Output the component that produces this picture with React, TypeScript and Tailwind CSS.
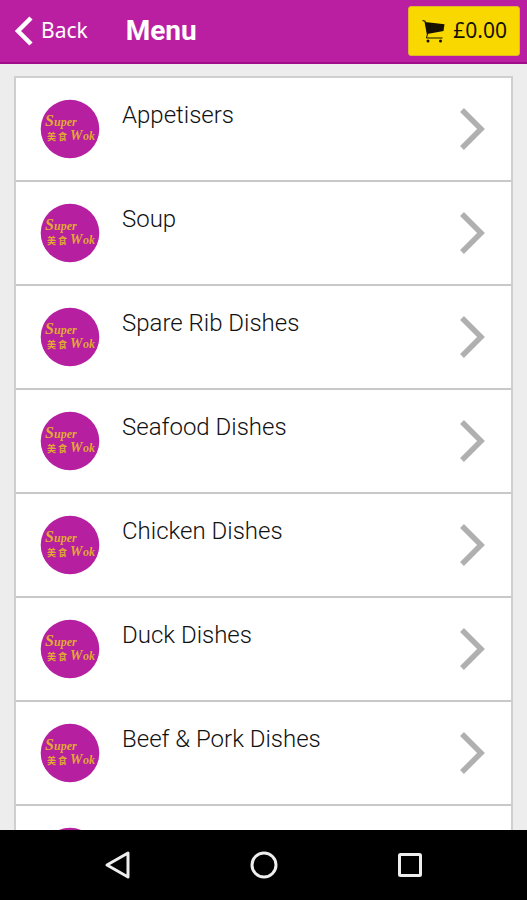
const categories = [
  'Appetisers',
  'Soup',
  'Spare Rib Dishes',
  'Seafood Dishes',
  'Chicken Dishes',
  'Duck Dishes',
  'Beef & Pork Dishes',
];

function WokLogo({ lettering = true }: { lettering?: boolean }) {
  return (
    <svg aria-hidden="true" className="size-[60px] shrink-0" viewBox="0 0 60 60">
      <circle cx="30" cy="30" r="29.3" fill="#b51fa0" />
      {lettering && (
        <g fill="#e2a832" fontFamily="'Liberation Serif', 'Noto Sans CJK SC', serif" fontStyle="italic" fontWeight="700">
          <text x="5" y="27" fontSize="16">S</text>
          <text x="14" y="27" fontSize="12">uper</text>
          <text x="7" y="41" fontSize="9" fontStyle="normal">美</text>
          <text x="18" y="41" fontSize="9" fontStyle="normal">食</text>
          <text x="30" y="41" fontSize="14">W</text>
          <text x="43" y="41" fontSize="12">ok</text>
        </g>
      )}
    </svg>
  );
}

function CartIcon() {
  return (
    <svg aria-hidden="true" className="h-6 w-6" viewBox="0 0 24 24" fill="none">
      <path d="M1.5 1.5L4 2.2L6.5 15.5" stroke="#151000" strokeWidth="1.2" />
      <path d="M4 3L23.5 5.2L22.5 12L6.2 15Z" fill="#151000" />
      <path d="M6.5 15L5.5 19H21.5" stroke="#151000" strokeWidth="1" />
      <circle cx="7" cy="22" r="1.5" fill="#151000" />
      <circle cx="19.5" cy="22" r="1.5" fill="#151000" />
    </svg>
  );
}

export default function App() {
  return (
    <div className="flex h-screen flex-col overflow-hidden bg-[#ededed] font-['Roboto',sans-serif]">
      {/* Header */}
      <header className="flex h-16 shrink-0 items-center border-b-2 border-[#a00d8a] bg-[#bb1fa1] pr-[7px] pl-[14px] text-white">
        <button className="flex items-center gap-2 font-['Noto_Sans',sans-serif] text-[21px] leading-7">
          <svg aria-hidden="true" className="h-[30px] w-[19px]" viewBox="0 0 19 30" fill="none">
            <path d="M17 2L4 15L17 28" stroke="white" strokeWidth="4.5" />
          </svg>
          <span className="pb-[2px]">Back</span>
        </button>
        <h1 className="ml-[38px] text-[28px] leading-8 font-bold">Menu</h1>
        <button className="ml-auto flex h-[50px] items-center gap-2 rounded-[3px] border border-[#dfb526] bg-[#f9d800] px-3 font-['Noto_Sans',sans-serif] text-[21px] leading-7 text-[#151000]">
          <CartIcon />
          <span className="pb-[2px]">£0.00</span>
        </button>
      </header>

      {/* Category list */}
      <main className="min-h-0 flex-1 overflow-hidden px-[14px] pt-3">
        <ul className="border-2 border-[#cfcfcf] bg-white">
          {categories.map((name) => (
            <li key={name} className="border-b-2 border-[#c8c8c8]">
              <button className="flex h-[102px] w-full items-center pr-[26px] pl-[24px] text-left">
                <WokLogo />
                <span className="ml-[22px] flex-1 self-start pt-[21px] text-2xl font-light text-[#111111]">{name}</span>
                <svg aria-hidden="true" className="h-11 w-[26px]" viewBox="0 0 26 44" fill="none">
                  <path d="M3 3L22 22L3 41" stroke="#b0b0b0" strokeWidth="5.5" />
                </svg>
              </button>
            </li>
          ))}
          {/* Next row, mostly below the fold */}
          <li className="flex h-[102px] items-center pl-[24px]">
            <WokLogo lettering={false} />
          </li>
        </ul>
      </main>

      {/* System navigation */}
      <nav className="flex h-[70px] shrink-0 items-center justify-center gap-[116px] bg-black">
        <button aria-label="Back">
          <svg className="size-[30px]" viewBox="0 0 30 30" fill="none">
            <path d="M25 3V27L4 15Z" stroke="#eeeeee" strokeWidth="3" strokeLinejoin="round" />
          </svg>
        </button>
        <button aria-label="Home">
          <svg className="size-[30px]" viewBox="0 0 30 30" fill="none">
            <circle cx="15" cy="15" r="12" stroke="#eeeeee" strokeWidth="3" />
          </svg>
        </button>
        <button aria-label="Recent apps">
          <svg className="size-[30px]" viewBox="0 0 30 30" fill="none">
            <rect x="4.5" y="4.5" width="21" height="21" rx="1" stroke="#eeeeee" strokeWidth="3" />
          </svg>
        </button>
      </nav>
    </div>
  );
}
